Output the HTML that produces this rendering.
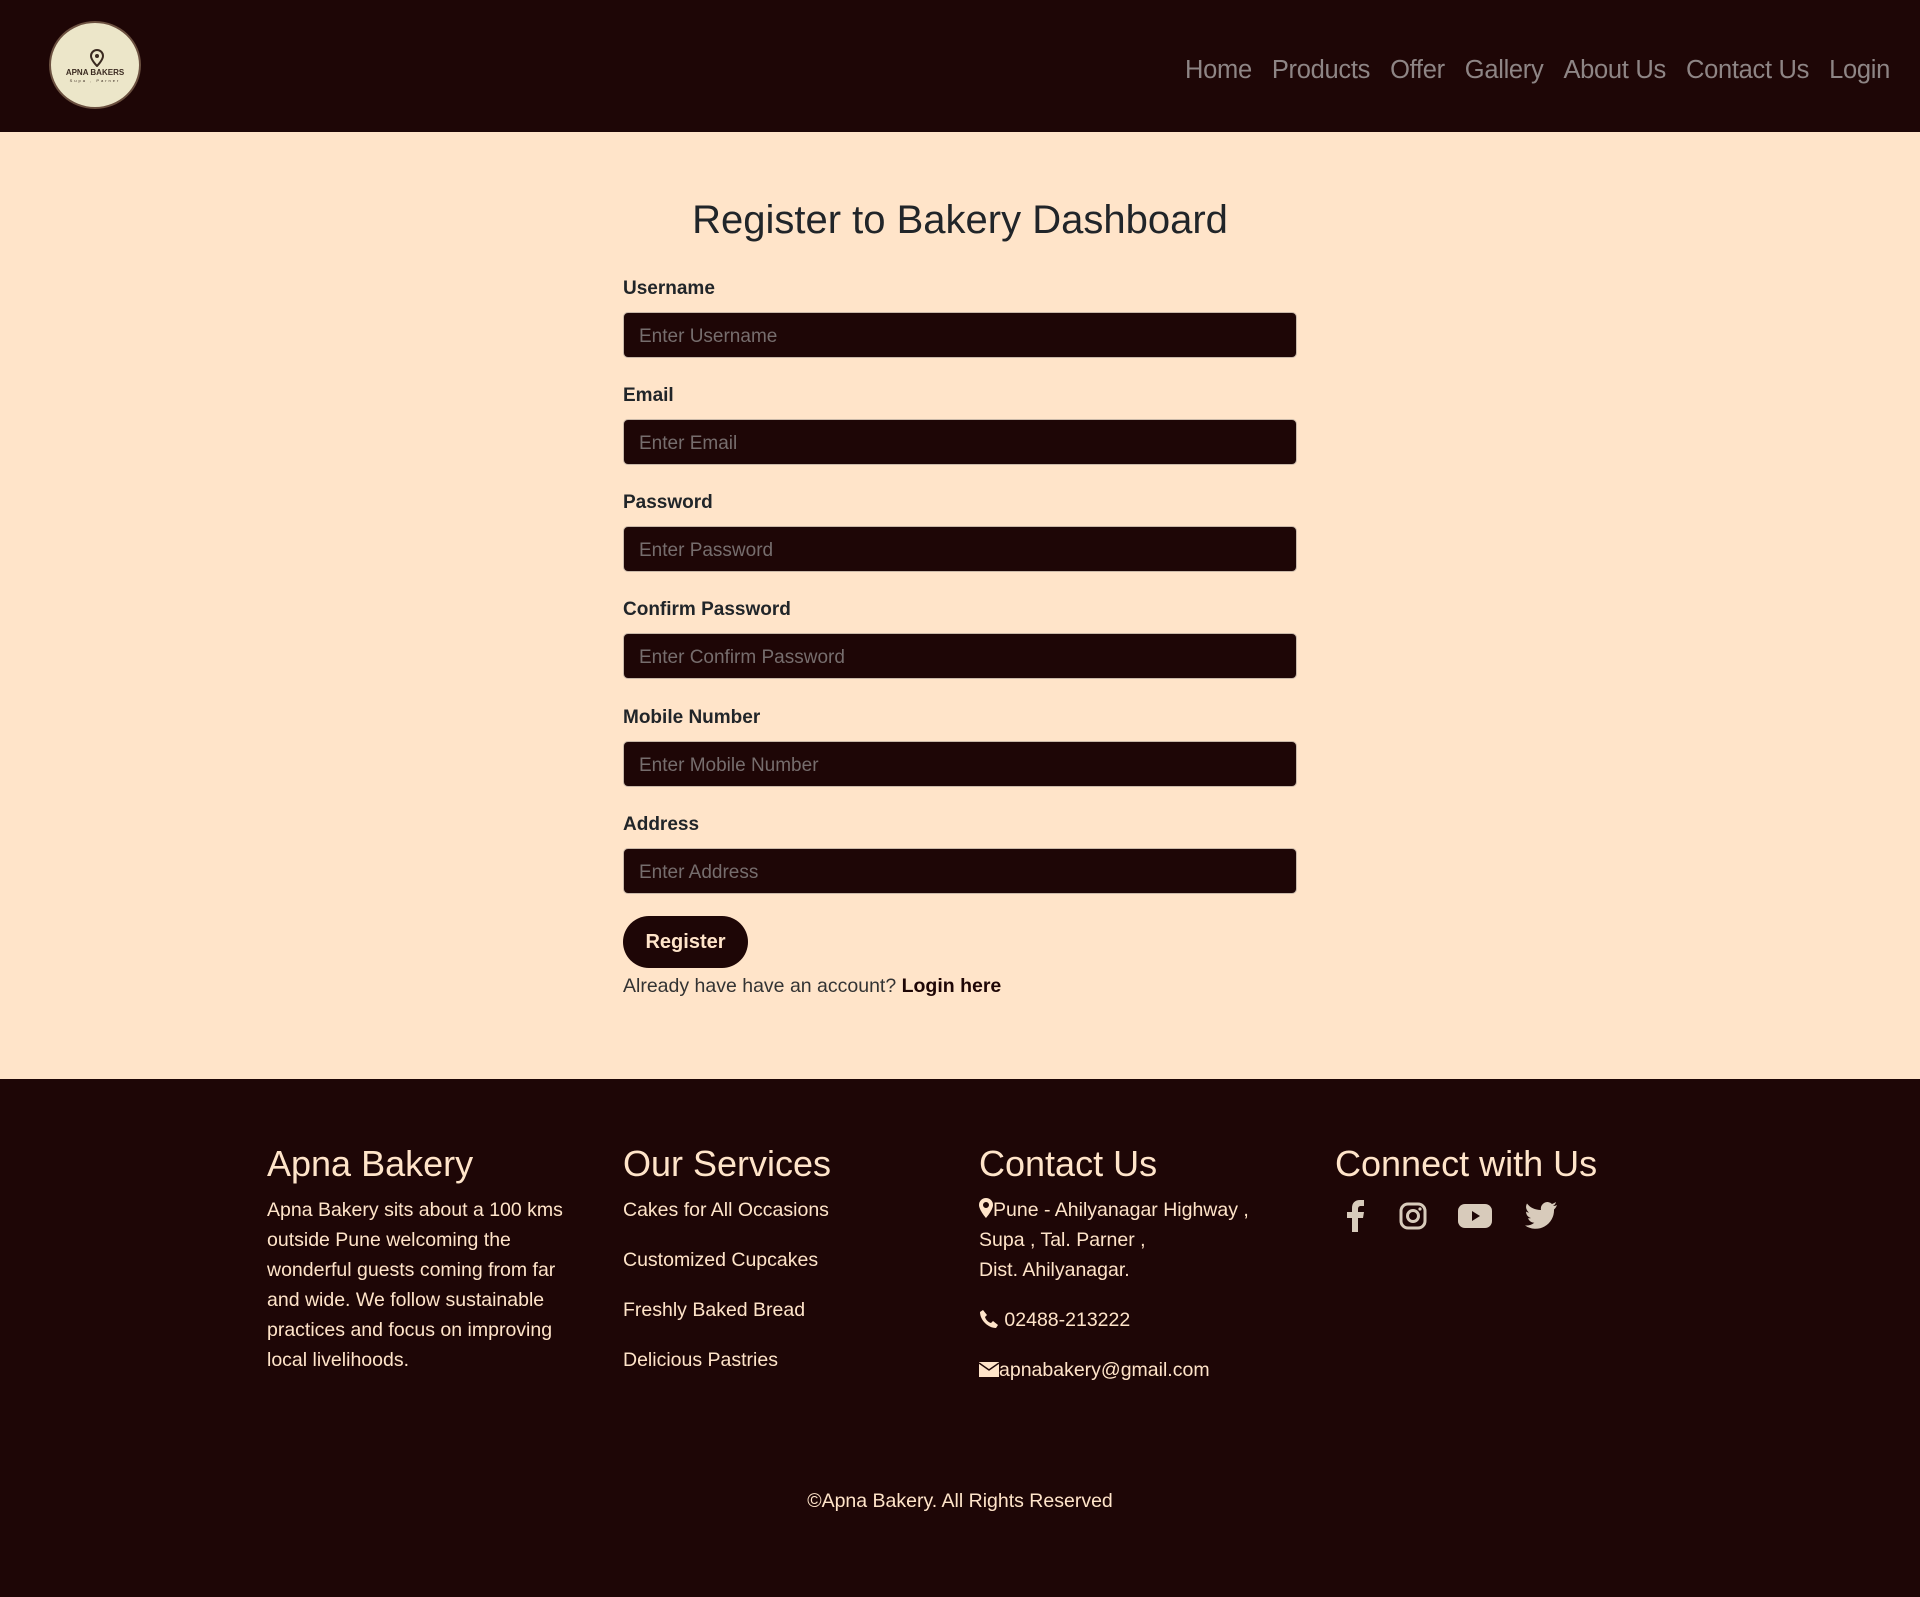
<!DOCTYPE html>
<html><head><meta charset="utf-8"><style>
*{box-sizing:border-box;margin:0;padding:0}
body{width:1920px;height:1597px;background:#ffe4c9;font-family:"Liberation Sans",sans-serif;color:#212529;position:relative;overflow:hidden}
.nav{position:absolute;left:0;top:0;width:1920px;height:132px;background:#1e0606}
.logo{position:absolute;left:49px;top:21px;width:92px;height:88px;border-radius:50%;background:#ece6c9;border:2px solid #6b5040;text-align:center;color:#3a2a20}
.logo .t{position:absolute;top:45px;width:100%;font-size:8px;font-weight:bold}
.logo .s{position:absolute;top:55px;width:100%;font-size:4px;letter-spacing:2px}
.links{position:absolute;right:30px;top:56px;font-size:25.5px;color:#8e8585;letter-spacing:-0.3px}
.links span{margin-left:20px}
h1{position:absolute;top:198px;width:100%;left:0;text-align:center;font-size:40px;font-weight:normal;color:#212529}
.f{position:absolute;left:623px;width:674px}
.f label{display:block;font-weight:bold;font-size:19px;color:#212529;position:relative;top:2px}
.f .in{margin-top:14px;height:46px;background:#1e0606;border-radius:5px;color:#766d6d;font-size:19px;padding:13px 15px 0;border:1px solid #c9b8a8}
.btn{position:absolute;left:623px;top:916px;width:125px;height:52px;border-radius:26px;background:#1e0606;color:#ffe4c9;font-weight:bold;font-size:20px;text-align:center;line-height:52px}
.al{position:absolute;left:623px;top:975px;font-size:19.5px;color:#333}
.al b{color:#1e0606}
.foot{position:absolute;left:0;top:1079px;width:1920px;height:518px;background:#1e0606;color:#ffe4c9}
.col{position:absolute;top:64px;width:320px}
.col h2{font-size:36px;font-weight:normal;margin-bottom:10px}
.col p{font-size:19.5px;line-height:30px}
.col .i{font-size:19.5px;line-height:30px;margin-bottom:20px}
.cp{position:absolute;top:411px;width:100%;text-align:center;font-size:19.5px}
.ic{position:absolute;top:121px}
</style></head><body>
<div class="nav">
 <div class="logo"><svg style="position:absolute;left:39px;top:26px" width="14" height="18" viewBox="0 0 14 18"><path d="M7 1a6 6 0 0 0-6 6c0 4 6 10 6 10s6-6 6-10a6 6 0 0 0-6-6z" fill="none" stroke="#3a2a20" stroke-width="2"/><circle cx="7" cy="7" r="2" fill="#3a2a20"/></svg><div class="t">APNA BAKERS</div><div class="s">Supa , Parner</div></div>
 <div class="links"><span>Home</span><span>Products</span><span>Offer</span><span>Gallery</span><span>About Us</span><span>Contact Us</span><span>Login</span></div>
</div>
<h1>Register to Bakery Dashboard</h1>
<div class="f" style="top:276px"><label>Username</label><div class="in">Enter Username</div></div>
<div class="f" style="top:383px"><label>Email</label><div class="in">Enter Email</div></div>
<div class="f" style="top:490px"><label>Password</label><div class="in">Enter Password</div></div>
<div class="f" style="top:597px"><label>Confirm Password</label><div class="in">Enter Confirm Password</div></div>
<div class="f" style="top:705px"><label>Mobile Number</label><div class="in">Enter Mobile Number</div></div>
<div class="f" style="top:812px"><label>Address</label><div class="in">Enter Address</div></div>
<div class="btn">Register</div>
<div class="al">Already have have an account? <b>Login here</b></div>
<div class="foot">
 <div class="col" style="left:267px"><h2>Apna Bakery</h2><p>Apna Bakery sits about a 100 kms outside Pune welcoming the wonderful guests coming from far and wide. We follow sustainable practices and focus on improving local livelihoods.</p></div>
 <div class="col" style="left:623px"><h2>Our Services</h2><div class="i">Cakes for All Occasions</div><div class="i">Customized Cupcakes</div><div class="i">Freshly Baked Bread</div><div class="i">Delicious Pastries</div></div>
 <div class="col" style="left:979px;width:330px"><h2>Contact Us</h2>
  <p><svg width="14" height="20" viewBox="0 0 14 20" style="vertical-align:-2px"><path d="M7 0a7 7 0 0 0-7 7c0 5 7 13 7 13s7-8 7-13a7 7 0 0 0-7-7zm0 4a3 3 0 1 1 0 6 3 3 0 0 1 0-6z" fill="#ffe4c9"/></svg>Pune - Ahilyanagar Highway ,<br>Supa , Tal. Parner ,<br>Dist. Ahilyanagar.</p>
  <p style="margin-top:20px"><svg width="20" height="20" viewBox="0 0 20 20" style="vertical-align:-3px"><path d="M4 1l4 5-2 2c1 3 3 5 6 6l2-2 5 4-2 3C9 19 1 11 1 3z" fill="#ffe4c9"/></svg> 02488-213222</p>
  <p style="margin-top:20px"><svg width="20" height="15" viewBox="0 0 20 15" style="vertical-align:-1px"><path d="M0 0h20v15H0z" fill="#ffe4c9"/><path d="M0 1l10 7 10-7" fill="none" stroke="#1e0606" stroke-width="1.5"/></svg>apnabakery@gmail.com</p></div>
 <div class="col" style="left:1335px"><h2>Connect with Us</h2></div>
 <svg class="ic" style="left:1346px" width="20" height="32" viewBox="0 0 20 32"><path d="M6 32V18H1v-6h5V8c0-5 3-8 8-8h4v6h-3c-2 0-3 1-3 3v3h6l-1 6h-5v14z" fill="#d8cbbb"/></svg>
 <svg class="ic" style="left:1399px;top:123px" width="28" height="28" viewBox="0 0 28 28"><rect x="2" y="2" width="24" height="24" rx="7" fill="none" stroke="#d8cbbb" stroke-width="3"/><circle cx="14" cy="14" r="5.5" fill="none" stroke="#d8cbbb" stroke-width="3"/><circle cx="21" cy="7" r="1.6" fill="#d8cbbb"/></svg>
 <svg class="ic" style="left:1458px;top:125px" width="34" height="24" viewBox="0 0 34 24"><rect width="34" height="24" rx="7" fill="#d8cbbb"/><path d="M14 7v10l8-5z" fill="#1e0606"/></svg>
 <svg class="ic" style="left:1525px;top:123px" width="32" height="27" viewBox="0 0 32 27"><path d="M32 3c-1 .5-2.5 1-4 1 1.5-1 2.5-2 3-4-1.5 1-3 1.5-4 2a6.5 6.5 0 0 0-11 6C10 8 5 5.5 2 1.5c-2 3.5-.5 7 2 9-1 0-2-.3-3-1 0 3.5 2.5 6 5 6.5-1 .3-2 .3-3 .2 1 2.5 3.5 4.5 6.3 4.5A13 13 0 0 1 0 23.5 18.5 18.5 0 0 0 29 7.5c1.2-1 2.3-2.5 3-4.5z" fill="#d8cbbb"/></svg>
 <div class="cp">©Apna Bakery. All Rights Reserved</div>
</div>
</body></html>
